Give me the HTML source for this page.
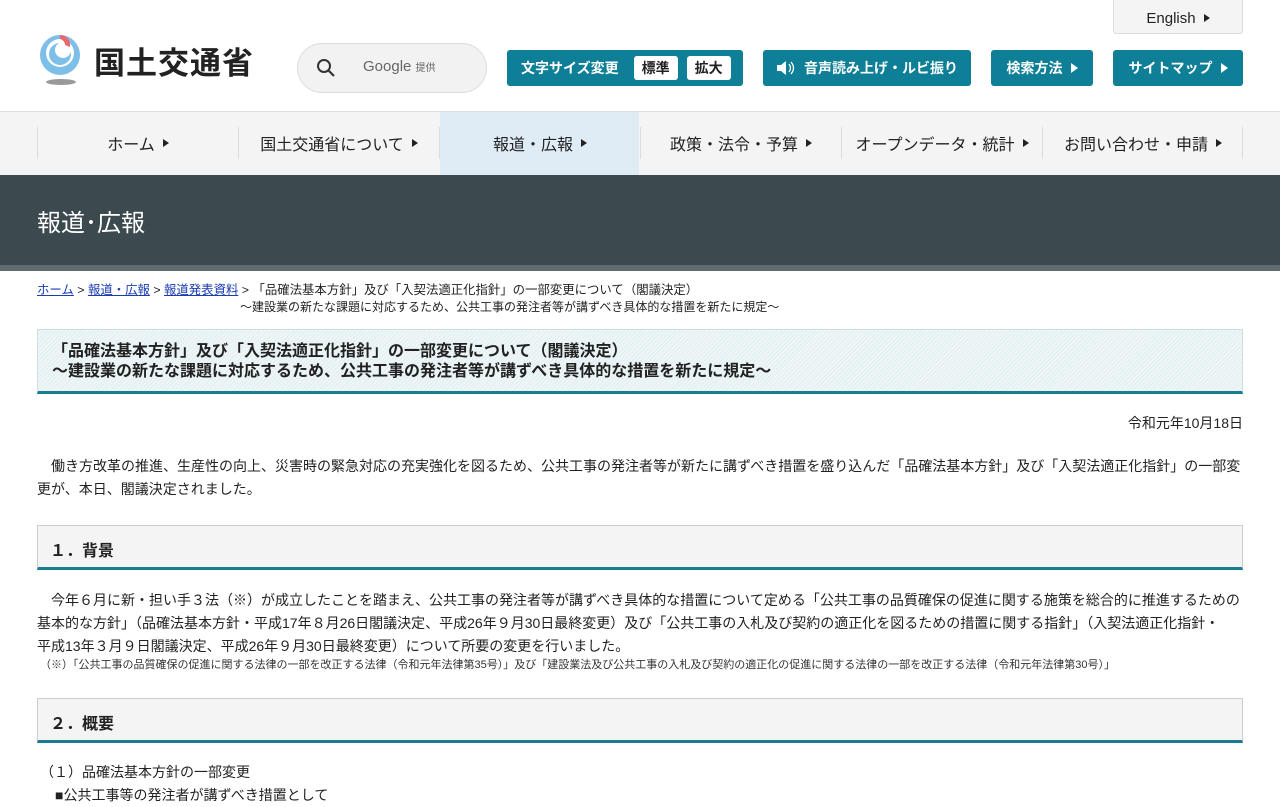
<!DOCTYPE html>
<html><head><meta charset="utf-8"><style>
*{margin:0;padding:0;box-sizing:border-box}
body{width:1280px;height:800px;overflow:hidden;background:#fff;font-family:"Liberation Sans","Noto Sans CJK JP",sans-serif;color:#222}
.abs{position:absolute}
.btn{position:absolute;top:50px;height:36px;background:#0e7f96;color:#fff;border-radius:3px;font-size:14px;font-weight:bold;display:flex;align-items:center;justify-content:center}
.tri{display:inline-block;width:0;height:0;border-left:7px solid currentColor;border-top:5px solid transparent;border-bottom:5px solid transparent;margin-left:8px}
.nav{position:absolute;top:112px;left:0;width:1280px;height:63px;background:#f4f4f4}
.ni{position:absolute;top:15px;height:32px;border-left:1px solid #ddd;display:flex;align-items:center;justify-content:center;font-size:16px;color:#222;width:201px}
.ni .tri{border-left-width:6px;border-top-width:4px;border-bottom-width:4px;margin-left:8px}
.sec{position:absolute;left:37px;width:1206px;height:45px;background:#f4f4f4;border:1px solid #ccc;border-bottom:3px solid #1a7b92;font-size:16px;font-weight:bold;padding:11px 0 0 12px}
p{position:absolute;font-size:14px;line-height:23px}
</style></head><body>
<svg class="abs" style="left:36px;top:33px" width="52" height="54" viewBox="0 0 52 54">
<circle cx="24" cy="22" r="20" fill="#7dbfe8"/>
<circle cx="24" cy="20" r="14" fill="#fff"/>
<circle cx="24" cy="21" r="11" fill="#7dbfe8"/>
<circle cx="27" cy="17" r="8" fill="#fff"/>
<path d="M24 2 A10 10 0 0 1 34 14 L29 12 A6 6 0 0 0 24 6Z" fill="#e8686e"/>
<ellipse cx="25" cy="49" rx="15" ry="3" fill="#999"/>
</svg>
<div class="abs" style="left:94px;top:38px;font-size:31px;font-weight:bold;color:#222;letter-spacing:1px">国土交通省</div>
<div class="abs" style="left:297px;top:43px;width:190px;height:50px;border:1px solid #ddd;border-radius:25px;background:#f2f2f2"></div>
<svg class="abs" style="left:316px;top:58px" width="20" height="20"><circle cx="8" cy="8" r="6" fill="none" stroke="#333" stroke-width="2"/><line x1="12.5" y1="12.5" x2="18" y2="18" stroke="#333" stroke-width="2.2"/></svg>
<div class="abs" style="left:363px;top:58px;font-size:15px;color:#666">Google <span style="font-size:10px">提供</span></div>
<div class="abs" style="left:1113px;top:0;width:130px;height:34px;background:#f4f4f4;border:1px solid #ddd;border-top:none;border-radius:0 0 3px 3px;font-size:15px;display:flex;align-items:center;justify-content:center;color:#222;padding-top:3px">English<span class="tri" style="border-left-width:6px;border-top-width:4px;border-bottom-width:4px"></span></div>
<div class="btn" style="left:507px;width:236px;justify-content:flex-start;padding-left:14px">文字サイズ変更
<span style="background:#fff;color:#222;border-radius:3px;padding:2px 8px;margin-left:15px">標準</span><span style="background:#fff;color:#222;border-radius:3px;padding:2px 8px;margin-left:9px">拡大</span></div>
<div class="btn" style="left:763px;width:208px"><svg width="20" height="16" style="margin-right:8px"><path d="M1 5h4l5-4v14l-5-4H1z" fill="#fff"/><path d="M13 4q3 4 0 8M15 2q5 6 0 12" stroke="#fff" fill="none" stroke-width="1.3"/></svg>音声読み上げ・ルビ振り</div>
<div class="btn" style="left:991px;width:102px">検索方法<span class="tri"></span></div>
<div class="btn" style="left:1113px;width:130px">サイトマップ<span class="tri"></span></div>
<div class="abs" style="left:0;top:111px;width:1280px;height:1px;background:#ddd"></div>
<div class="nav">
<div class="abs" style="left:440px;top:0;width:199px;height:63px;background:#e0ecf5"></div>
<div class="ni" style="left:37px">ホーム<span class="tri"></span></div>
<div class="ni" style="left:238px">国土交通省について<span class="tri"></span></div>
<div class="ni" style="left:439px">報道・広報<span class="tri"></span></div>
<div class="ni" style="left:640px">政策・法令・予算<span class="tri"></span></div>
<div class="ni" style="left:841px">オープンデータ・統計<span class="tri"></span></div>
<div class="ni" style="left:1042px">お問い合わせ・申請<span class="tri"></span></div>
<div class="abs" style="left:1242px;top:15px;height:32px;border-left:1px solid #ddd"></div>
</div>
<div class="abs" style="left:0;top:175px;width:1280px;height:90px;background:#3c4a50"></div>
<div class="abs" style="left:0;top:265px;width:1280px;height:6px;background:#5f6b70"></div>
<div class="abs" style="left:37px;top:203px;font-size:24px;color:#fff">報道･広報</div>
<div class="abs" style="left:37px;top:282px;font-size:12.4px;line-height:17px;color:#222"><a style="color:#1a3cb0;text-decoration:underline">ホーム</a> &gt; <a style="color:#1a3cb0;text-decoration:underline">報道・広報</a> &gt; <a style="color:#1a3cb0;text-decoration:underline">報道発表資料</a> &gt; 「品確法基本方針」及び「入契法適正化指針」の一部変更について（閣議決定）</div>
<div class="abs" style="left:240px;top:299px;font-size:12px;line-height:17px">～建設業の新たな課題に対応するため、公共工事の発注者等が講ずべき具体的な措置を新たに規定～</div>
<div class="abs" style="left:37px;top:329px;width:1206px;height:65px;border:1px solid #c9dfe3;border-bottom:3px solid #1a7b92;background:repeating-linear-gradient(-45deg,#eef6f7 0 2px,#e0eef1 2px 3px);padding:12px 0 0 14px;font-size:16px;font-weight:bold;line-height:20px">「品確法基本方針」及び「入契法適正化指針」の一部変更について（閣議決定）<br>～建設業の新たな課題に対応するため、公共工事の発注者等が講ずべき具体的な措置を新たに規定～</div>
<p style="right:37px;top:412px">令和元年10月18日</p>
<p style="left:37px;top:455px;width:1206px">　働き方改革の推進、生産性の向上、災害時の緊急対応の充実強化を図るため、公共工事の発注者等が新たに講ずべき措置を盛り込んだ「品確法基本方針」及び「入契法適正化指針」の一部変更が、本日、閣議決定されました。</p>
<div class="sec" style="top:525px">１．背景</div>
<p style="left:37px;top:589px;width:1206px">　今年６月に新・担い手３法（※）が成立したことを踏まえ、公共工事の発注者等が講ずべき具体的な措置について定める「公共工事の品質確保の促進に関する施策を総合的に推進するための基本的な方針」（品確法基本方針・平成17年８月26日閣議決定、平成26年９月30日最終変更）及び「公共工事の入札及び契約の適正化を図るための措置に関する指針」（入契法適正化指針・<br>平成13年３月９日閣議決定、平成26年９月30日最終変更）について所要の変更を行いました。</p>
<div class="abs" style="left:40px;top:656px;font-size:11px;color:#333">（※）「公共工事の品質確保の促進に関する法律の一部を改正する法律（令和元年法律第35号）」及び「建設業法及び公共工事の入札及び契約の適正化の促進に関する法律の一部を改正する法律（令和元年法律第30号）」</div>
<div class="sec" style="top:698px">２．概要</div>
<p style="left:40px;top:761px">（１）品確法基本方針の一部変更</p>
<p style="left:55px;top:784px">■公共工事等の発注者が講ずべき措置として</p>
</body></html>
